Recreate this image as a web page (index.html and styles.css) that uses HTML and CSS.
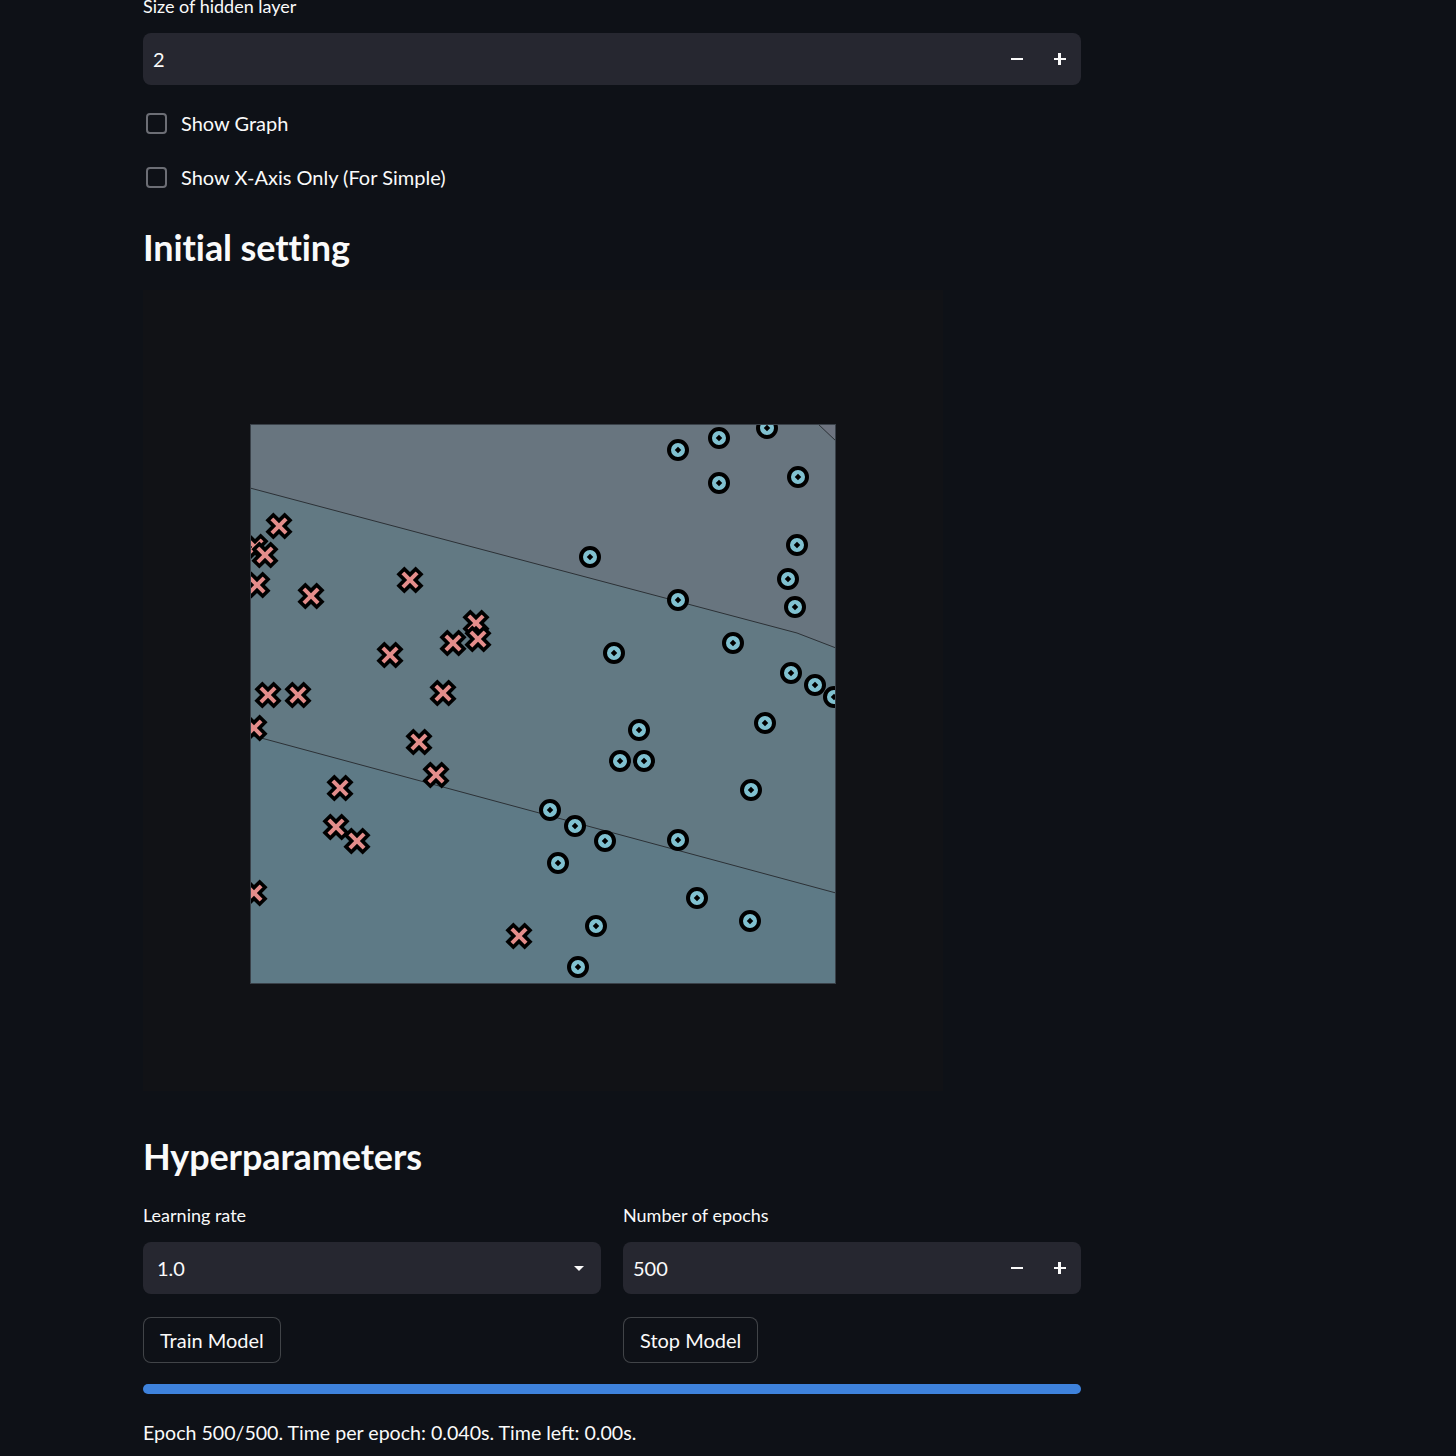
FILE: index.html
```html
<!DOCTYPE html>
<html>
<head>
<meta charset="utf-8">
<link rel="stylesheet" href="styles.css">
</head>
<body>
<main class="main">
  <div class="label label-top">Size of hidden layer</div>
  <div class="field">
    <span class="field-value">2</span>
    <span class="steppers">
      <span class="step"><span class="minus"></span></span>
      <span class="step"><span class="plus"></span></span>
    </span>
  </div>

  <div class="checks">
    <label class="check"><span class="box"></span><span>Show Graph</span></label>
    <label class="check"><span class="box"></span><span>Show X-Axis Only (For Simple)</span></label>
  </div>

  <h2 class="heading h-initial">Initial setting</h2>

  <div class="figure">
    <svg width="800" height="801" viewBox="0 0 800 801" xmlns="http://www.w3.org/2000/svg">
      <defs>
        <clipPath id="ax">
          <rect x="107" y="134" width="586" height="560"/>
        </clipPath>
        <g id="o">
          <circle cx="0" cy="0" r="9" fill="#80c1d0" stroke="#000" stroke-width="4"/>
          <rect x="-2.3" y="-2.3" width="4.6" height="4.6" fill="#000" transform="rotate(45)"/>
        </g>
        <g id="x">
          <polygon points="-3.8,-11.8 3.8,-11.8 3.8,-3.8 11.8,-3.8 11.8,3.8 3.8,3.8 3.8,11.8 -3.8,11.8 -3.8,3.8 -11.8,3.8 -11.8,-3.8 -3.8,-3.8" transform="rotate(45)" fill="#e48d8b" stroke="#000" stroke-width="3.6" stroke-linejoin="miter"/>
        </g>
      </defs>
      <g clip-path="url(#ax)">
        <rect x="107" y="134" width="586" height="560" fill="#5e7a86"/>
        <polygon points="107,134 693,134 693,603 107,445" fill="#627983"/>
        <polygon points="107,134 693,134 693,358 654,343 107,198" fill="#68757f"/>
        <polygon points="675,134 693,134 693,151" fill="#6e7480"/>
        <polyline points="107,198 654,343 693,358" fill="none" stroke="#2c3136" stroke-width="1"/>
        <line x1="107" y1="445" x2="693" y2="603" stroke="#2c3136" stroke-width="1"/>
        <line x1="675" y1="134" x2="693" y2="151" stroke="#2c3136" stroke-width="1"/>

        <use href="#x" x="136" y="236"/>
        <use href="#x" x="112" y="257"/>
        <use href="#x" x="122" y="265"/>
        <use href="#x" x="114" y="295"/>
        <use href="#x" x="168" y="306"/>
        <use href="#x" x="267" y="290"/>
        <use href="#x" x="333" y="333"/>
        <use href="#x" x="310" y="353"/>
        <use href="#x" x="335" y="349"/>
        <use href="#x" x="247" y="365"/>
        <use href="#x" x="300" y="403"/>
        <use href="#x" x="125" y="405"/>
        <use href="#x" x="155" y="405"/>
        <use href="#x" x="111" y="438"/>
        <use href="#x" x="276" y="452"/>
        <use href="#x" x="293" y="485"/>
        <use href="#x" x="197" y="498"/>
        <use href="#x" x="193" y="537"/>
        <use href="#x" x="214" y="551"/>
        <use href="#x" x="111" y="603"/>
        <use href="#x" x="376" y="646"/>

        <use href="#o" x="535" y="160"/>
        <use href="#o" x="576" y="148"/>
        <use href="#o" x="624" y="138"/>
        <use href="#o" x="576" y="193"/>
        <use href="#o" x="655" y="187"/>
        <use href="#o" x="447" y="267"/>
        <use href="#o" x="654" y="255"/>
        <use href="#o" x="645" y="289"/>
        <use href="#o" x="652" y="317"/>
        <use href="#o" x="535" y="310"/>
        <use href="#o" x="590" y="353"/>
        <use href="#o" x="471" y="363"/>
        <use href="#o" x="648" y="383"/>
        <use href="#o" x="672" y="395"/>
        <use href="#o" x="691" y="407"/>
        <use href="#o" x="622" y="433"/>
        <use href="#o" x="496" y="440"/>
        <use href="#o" x="477" y="471"/>
        <use href="#o" x="501" y="471"/>
        <use href="#o" x="608" y="500"/>
        <use href="#o" x="407" y="520"/>
        <use href="#o" x="432" y="536"/>
        <use href="#o" x="462" y="551"/>
        <use href="#o" x="535" y="550"/>
        <use href="#o" x="415" y="573"/>
        <use href="#o" x="554" y="608"/>
        <use href="#o" x="607" y="631"/>
        <use href="#o" x="453" y="636"/>
        <use href="#o" x="435" y="677"/>
      </g>
      <rect x="107.5" y="134.5" width="585" height="559" fill="none" stroke="#3a4149" stroke-width="1"/>
    </svg>
  </div>

  <h2 class="heading h-hyper">Hyperparameters</h2>

  <div class="cols">
    <div class="col">
      <div class="label">Learning rate</div>
      <div class="field field-select">
        <span class="field-value">1.0</span>
        <span class="caret"></span>
      </div>
      <button class="btn">Train Model</button>
    </div>
    <div class="col">
      <div class="label">Number of epochs</div>
      <div class="field">
        <span class="field-value">500</span>
        <span class="steppers">
          <span class="step"><span class="minus"></span></span>
          <span class="step"><span class="plus"></span></span>
        </span>
      </div>
      <button class="btn">Stop Model</button>
    </div>
  </div>

  <div class="progress"><div class="progress-fill"></div></div>
  <p class="status">Epoch 500/500. Time per epoch: 0.040s. Time left: 0.00s.</p>
</main>
</body>
</html>
```
FILE: styles.css
```css
html, body {
  margin: 0;
  padding: 0;
  background: #0e1117;
  color: #fafafa;
  font-family: "Lato", "Noto Sans", sans-serif;
  overflow: hidden;
}

.main {
  width: 938px;
  margin-left: 143px;
}

.label {
  font-size: 18px;
  line-height: 24px;
  height: 24px;
  margin-bottom: 15px;
  color: #fafafa;
}

.label-top {
  margin-top: -6px;
}

.field {
  height: 52px;
  background: #262730;
  border-radius: 8px;
  display: flex;
  align-items: center;
  justify-content: space-between;
  padding-left: 10px;
  box-sizing: border-box;
}

.field-value {
  font-size: 20px;
}

.field-select {
  padding-left: 14px;
  padding-right: 17px;
}

.caret {
  width: 0;
  height: 0;
  border-left: 5px solid transparent;
  border-right: 5px solid transparent;
  border-top: 5px solid #fafafa;
}

.steppers {
  display: flex;
  height: 100%;
}

.step {
  width: 43px;
  height: 100%;
  display: flex;
  align-items: center;
  justify-content: center;
  position: relative;
}

.minus {
  width: 12px;
  height: 2.5px;
  background: #fafafa;
}

.plus {
  width: 12px;
  height: 12px;
  position: relative;
}

.plus::before, .plus::after {
  content: "";
  position: absolute;
  background: #fafafa;
}

.plus::before {
  left: 0;
  top: 4.75px;
  width: 12px;
  height: 2.5px;
}

.plus::after {
  left: 4.75px;
  top: 0;
  width: 2.5px;
  height: 12px;
}

.checks {
  margin-top: 23px;
  display: flex;
  flex-direction: column;
  gap: 24px;
}

.check {
  display: flex;
  align-items: center;
  height: 30px;
  font-size: 20px;
}

.box {
  width: 17px;
  height: 17px;
  border: 2px solid #6c6e75;
  border-radius: 4px;
  margin-left: 3px;
  margin-right: 14px;
}

.heading {
  font-size: 36px;
  font-weight: 700;
  line-height: 44px;
  margin: 0;
  letter-spacing: -0.1px;
}

.h-initial {
  margin-top: 33px;
}

.figure {
  margin-top: 21px;
  width: 800px;
  height: 801px;
  background: #111216;
}

.figure svg {
  display: block;
}

.h-hyper {
  margin-top: 43px;
}

.cols {
  margin-top: 25px;
  display: grid;
  grid-template-columns: 1fr 1fr;
  column-gap: 22px;
}

.col {
  display: flex;
  flex-direction: column;
  align-items: flex-start;
}

.col .field {
  width: 100%;
}

.btn {
  margin-top: 23px;
  height: 46px;
  padding: 0 16px;
  background: #0e1117;
  color: #fafafa;
  border: 1px solid rgba(250, 250, 250, 0.22);
  border-radius: 8px;
  font-family: inherit;
  font-size: 20px;
}

.progress {
  margin-top: 21px;
  height: 10px;
  background: #262730;
  border-radius: 5px;
  overflow: hidden;
}

.progress-fill {
  width: 100%;
  height: 100%;
  background: #3e82dc;
}

.status {
  margin: 24px 0 0;
  font-size: 19.6px;
  line-height: 30px;
}
```
